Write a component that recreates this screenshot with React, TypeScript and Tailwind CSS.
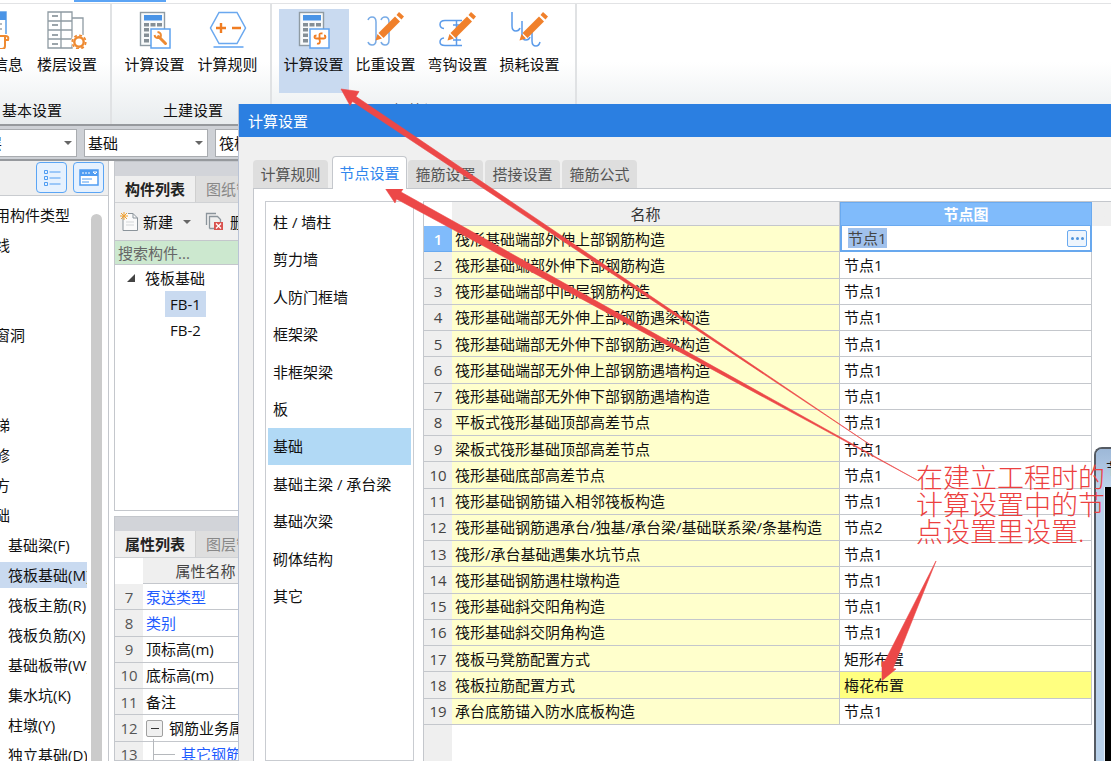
import type { ReactNode } from "react";
import clsx from "clsx";

const typeRows = [
  { text: "常用构件类型", child: false },
  { text: "轴线", child: false },
  { text: "", child: false },
  { text: "", child: false },
  { text: "门窗洞", child: false },
  { text: "", child: false },
  { text: "", child: false },
  { text: "楼梯", child: false },
  { text: "装修", child: false },
  { text: "土方", child: false },
  { text: "基础", child: false },
  { text: "基础梁(F)", child: true },
  { text: "筏板基础(M)", child: true, active: true },
  { text: "筏板主筋(R)", child: true },
  { text: "筏板负筋(X)", child: true },
  { text: "基础板带(W)", child: true },
  { text: "集水坑(K)", child: true },
  { text: "柱墩(Y)", child: true },
  { text: "独立基础(D)", child: true },
];

const propertyRows = [
  { no: 7, name: "泵送类型", link: true },
  { no: 8, name: "类别", link: true },
  { no: 9, name: "顶标高(m)", link: false },
  { no: 10, name: "底标高(m)", link: false },
  { no: 11, name: "备注", link: false },
];

const dialogTabs = ["计算规则", "节点设置", "箍筋设置", "搭接设置", "箍筋公式"];

const categories = [
  "柱 / 墙柱",
  "剪力墙",
  "人防门框墙",
  "框架梁",
  "非框架梁",
  "板",
  "基础",
  "基础主梁 / 承台梁",
  "基础次梁",
  "砌体结构",
  "其它",
];

const nodeRows = [
  ["筏形基础端部外伸上部钢筋构造", "节点1"],
  ["筏形基础端部外伸下部钢筋构造", "节点1"],
  ["筏形基础端部中间层钢筋构造", "节点1"],
  ["筏形基础端部无外伸上部钢筋遇梁构造", "节点1"],
  ["筏形基础端部无外伸下部钢筋遇梁构造", "节点1"],
  ["筏形基础端部无外伸上部钢筋遇墙构造", "节点1"],
  ["筏形基础端部无外伸下部钢筋遇墙构造", "节点1"],
  ["平板式筏形基础顶部高差节点", "节点1"],
  ["梁板式筏形基础顶部高差节点", "节点1"],
  ["筏形基础底部高差节点", "节点1"],
  ["筏形基础钢筋锚入相邻筏板构造", "节点1"],
  ["筏形基础钢筋遇承台/独基/承台梁/基础联系梁/条基构造", "节点2"],
  ["筏形/承台基础遇集水坑节点", "节点1"],
  ["筏形基础钢筋遇柱墩构造", "节点1"],
  ["筏形基础斜交阳角构造", "节点1"],
  ["筏形基础斜交阴角构造", "节点1"],
  ["筏板马凳筋配置方式", "矩形布置"],
  ["筏板拉筋配置方式", "梅花布置"],
  ["承台底筋锚入防水底板构造", "节点1"],
];

function InfoIcon() {
  return (
    <svg width="38" height="38" viewBox="0 0 38 38" fill="none">
      <path d="M1 1h31v22M1 1v35h18" stroke="#5b9fe8" strokeWidth="1.5" />
      <path d="M1 1h31v8H1z" fill="#4a94e6" />
      <path d="M18 13h10M18 18h10M18 23h6" stroke="#9aa3aa" strokeWidth="1.5" />
      <path d="M21 25h11q3 0 2 4h-3v6q0 3-3 3H17q3-1 3-4v-6q0-3 1-3M31 29v-3" stroke="#ee8a32" strokeWidth="2" />
    </svg>
  );
}

function FloorIcon() {
  return (
    <svg width="40" height="38" viewBox="0 0 40 38" fill="none">
      <path d="M1 1h24v36H1zM1 10h24M1 19h24M1 28h24M14 1v36M25 7h11v17" stroke="#8f9ba3" strokeWidth="1.3" />
      <path d="M5 5h6M5 14h6M5 24h6M5 33h6" stroke="#7b868e" strokeWidth="1.5" />
      <circle cx="32" cy="31" r="8" fill="white" />
      <circle cx="32" cy="31" r="4.7" stroke="#ee8a32" strokeWidth="2.4" />
      <circle cx="32" cy="31" r="6.7" stroke="#ee8a32" strokeWidth="1.8" strokeDasharray="2.9 2.36" />
    </svg>
  );
}

function CalculatorIcon({ children }: { children: ReactNode }) {
  return (
    <svg width="32" height="38" viewBox="0 0 32 38" fill="none">
      <rect x="1.5" y="1.5" width="24" height="33" fill="#f8fafb" stroke="#8f9ba3" strokeWidth="1.4" />
      <path d="M5 4h18v5.5H5z" fill="#4a94e6" />
      <path d="M5 12h5v3.500H5zM11.500 12h5v3.500h-5zM18 12h5v3.500h-5zM5 17h5v3.500H5zM5 22.500h5V26H5zM5 28h5v3.500H5z" fill="#858f96" />
      <rect x="12" y="18" width="19" height="19" fill="white" stroke="#5ea2f0" strokeWidth="1.500" />
      {children}
    </svg>
  );
}

function WrenchCalculatorIcon() {
  return (
    <CalculatorIcon>
      <path d="M19.500 25.500l7 7" stroke="#ee8a32" strokeWidth="3" strokeLinecap="round" />
      <path d="M18.500 21q3.500.5 3.500 3.500t-3 2.500q-3 0-3.500-3" stroke="#ee8a32" strokeWidth="1.800" />
    </CalculatorIcon>
  );
}

function RebarCalculatorIcon() {
  return (
    <CalculatorIcon>
      <path
        d="M21.500 29.500v-6q0-1.500 3-1M19 32.500q3 1 3-3M18.500 24.500q-2 0-2 1.500t2 1.500h7.500q1.500 0 1.500-1.500t-1.500-1.500"
        stroke="#f07d22"
        strokeWidth="1.800"
      />
    </CalculatorIcon>
  );
}

function RuleIcon() {
  return (
    <svg width="38" height="38" viewBox="0 0 38 38" fill="none">
      <path d="M10 1.500h18L36.500 17 28 32.500H10L1.500 17z" fill="white" stroke="#6aa8ef" strokeWidth="1.5" />
      <path d="M4.500 36h30" stroke="#5ea2f0" strokeWidth="1.500" />
      <path d="M7 17h10M12 12v10M23 17h9" stroke="#f07d22" strokeWidth="2.400" />
    </svg>
  );
}

function Pencil() {
  return (
    <g fill="#f0802b">
      <path d="M29 5.500l5 5L17.500 27l-5-5z" />
      <path d="M30.500 4l2.500-3L38 5.500 35.500 8.500z" />
      <path d="M11.500 23l4.500 4.500-6.500 2z" />
    </g>
  );
}

function WeightIcon() {
  return (
    <svg width="40" height="38" viewBox="0 0 40 38" fill="none">
      <path
        d="M2 9q1-3 4-3 4 0 4 5v18q0 5-4 5-3 0-4-3M15 9q1-3 4-3 4 0 4 5v18q0 5-4 5-3 0-4-3"
        stroke="#78abe6"
        strokeWidth="1.500"
      />
      <Pencil />
    </svg>
  );
}

function HookIcon() {
  return (
    <svg width="40" height="38" viewBox="0 0 40 38" fill="none">
      <path
        d="M6 17.500q-4-.5-4-4 0-4 5-4h17M6 27q-4 .5-4 4 0 3.500 5 3.500h17M18.500 9.500v25M15 29h8M15 14h7"
        stroke="#5b9bea"
        strokeWidth="1.500"
      />
      <Pencil />
    </svg>
  );
}

function LossIcon() {
  return (
    <svg width="40" height="38" viewBox="0 0 40 38" fill="none">
      <path d="M2 1v14q0 5 4 5 3 0 4-3M12 10v14q0 5 4 5 3 0 4-3M22 19v11q0 5 4 5 3 0 4-4" stroke="#5b9bea" strokeWidth="1.500" />
      <Pencil />
    </svg>
  );
}

function RibbonButton({ icon, label, active = false }: { icon: ReactNode; label: string; active?: boolean }) {
  return (
    <button
      type="button"
      className={clsx(
        "flex h-[84px] w-[70px] shrink-0 flex-col items-center gap-[5px] whitespace-nowrap pt-0.5",
        active && "bg-[#c9daf0]",
      )}
    >
      <span className="flex h-[38px] items-center">{icon}</span>
      {label}
    </button>
  );
}

function Ribbon() {
  return (
    <div className="flex h-[126px] shrink-0 flex-col border-b-2 border-[#96999d] bg-linear-to-b from-white from-50% to-[#e8ecee]">
      <div className="flex h-1 shrink-0 items-start border-b border-[#e2e3e5] pl-[74px]">
        <div className="h-0.5 w-[92px] bg-[#5ba4f5]" />
      </div>
      <div className="flex flex-1">
        <div className="flex w-28 shrink-0 justify-end border-r-2 border-[#e0e2e4] pt-[5px]">
          <div className="flex flex-col items-end gap-[7px]">
            <div className="flex gap-1 pr-2">
              <RibbonButton icon={<InfoIcon />} label="工程信息" />
              <RibbonButton icon={<FloorIcon />} label="楼层设置" />
            </div>
            <div className="pr-12">基本设置</div>
          </div>
        </div>
        <div className="flex w-40 shrink-0 flex-col items-center gap-[7px] border-r-2 border-[#e0e2e4] pt-[5px]">
          <div className="flex gap-[3px]">
            <RibbonButton icon={<WrenchCalculatorIcon />} label="计算设置" />
            <RibbonButton icon={<RuleIcon />} label="计算规则" />
          </div>
          <div className="pl-1">土建设置</div>
        </div>
        <div className="flex w-[305px] shrink-0 flex-col items-center gap-[7px] border-r-2 border-[#e0e2e4] pt-[5px]">
          <div className="flex gap-0.5 pr-1">
            <RibbonButton icon={<RebarCalculatorIcon />} label="计算设置" active />
            <RibbonButton icon={<WeightIcon />} label="比重设置" />
            <RibbonButton icon={<HookIcon />} label="弯钩设置" />
            <RibbonButton icon={<LossIcon />} label="损耗设置" />
          </div>
          <div>钢筋设置</div>
        </div>
      </div>
    </div>
  );
}

function SelectorBar() {
  const box = "h-7 w-[124px] appearance-none border border-[#a9acb0] bg-white px-[3px] outline-none";
  const caret =
    "pointer-events-none absolute top-3 right-[5px] border-x-4 border-t-4 border-x-transparent border-t-[#666]";
  return (
    <div className="flex h-[35px] shrink-0 items-center gap-[7px] border-b-2 border-[#96999d] bg-[#ced1d6]">
      <div className="relative -ml-[47px]">
        <select aria-label="楼层" className={box}>
          <option>基础层</option>
        </select>
        <span className={caret} />
      </div>
      <div className="relative">
        <select aria-label="构件分类" className={box}>
          <option>基础</option>
        </select>
        <span className={caret} />
      </div>
      <select aria-label="构件" className={box}>
        <option>筏板基础</option>
      </select>
    </div>
  );
}

function TypeSidebar() {
  return (
    <aside className="flex w-[109px] shrink-0 flex-col border-r border-[#c4c7cc]">
      <div className="flex h-[35px] shrink-0 items-start justify-end gap-1.5 border-b border-[#c9ccd0] bg-[#efefef] pt-px pr-1">
        <button type="button" aria-label="列表" className="flex size-[31px] items-center justify-center rounded-sm border border-[#5aa5f5] bg-[#e6f1fe]">
          <svg width="18" height="18" viewBox="0 0 18 18" fill="none" stroke="#4f9cf2">
            <path d="M1.500 1.500h3v3h-3zM1.500 7.500h3v3h-3zM1.500 13.500h3v3h-3zM6.500 3h11M6.500 9h11M6.500 15h11" />
          </svg>
        </button>
        <button type="button" aria-label="窗口" className="flex size-[31px] items-center justify-center rounded-sm border border-[#5aa5f5] bg-[#e6f1fe]">
          <svg width="20" height="18" viewBox="0 0 20 18" fill="none">
            <path d="M1 1h18v15H1z" fill="white" stroke="#4f9cf2" strokeWidth="1.500" />
            <path d="M1 1h18v6H1z" fill="#4f9cf2" />
            <path d="M3 4h2M6 4h2M9 4h2M14 3h4l-2 2z" stroke="white" />
            <path d="M3 10h10M3 13h7" stroke="#4f9cf2" />
          </svg>
        </button>
      </div>
      <div className="flex flex-1 overflow-hidden pt-1">
        <ul className="w-[87px] shrink-0 overflow-hidden">
          {typeRows.map((row, i) => (
            <li key={i} className={clsx("flex h-[30px] items-center whitespace-nowrap", row.child ? "pl-2" : "-ml-5")}>
              <span className={clsx(row.active && "-ml-2 bg-[#c9daf0] py-[3px] pl-2")}>{row.text}</span>
            </li>
          ))}
        </ul>
        <div className="mt-3.5 ml-1 w-[11px] rounded-t-md bg-[#cbcbcb]" />
      </div>
    </aside>
  );
}

function PanelTabs({ active, other }: { active: string; other: string }) {
  return (
    <div className="flex h-[27px] shrink-0 border-b border-[#d0d2d5] bg-[#dedede]">
      <button type="button" className="w-[81px] shrink-0 border-r border-[#cfcfcf] bg-[#efefef] font-semibold text-[#222]">
        {active}
      </button>
      <button type="button" className="shrink-0 pl-2.5 text-[#888]">
        {other}
      </button>
    </div>
  );
}

function ComponentPanel() {
  return (
    <section className="flex h-[350px] shrink-0 flex-col border border-[#c4c7cc]">
      <div className="h-3.5 shrink-0 bg-[#d2d4d9]" />
      <PanelTabs active="构件列表" other="图纸管理" />
      <div className="flex h-[38px] shrink-0 items-center border-b border-[#c4c7cc] bg-[#efefef] pl-[5px] whitespace-nowrap">
        <button type="button" className="flex items-center">
          <svg width="19" height="20" viewBox="0 0 19 20" fill="none">
            <path d="M3 4v14.500h14.500V6L13 1.500H8M13 1.500V6h4.500" fill="#fafafa" stroke="#8b949b" />
            <path d="M6 10h8M6 13h8" stroke="#d4d7d9" />
            <path d="M4 0v8M0 4h8M1 1l6 6M7 1L1 7" stroke="#f0a030" />
          </svg>
          <span className="ml-1">新建</span>
          <span className="ml-2.5 border-x-4 border-t-4 border-x-transparent border-t-[#666]" />
        </button>
        <button type="button" className="ml-3.5 flex items-center">
          <svg width="19" height="19" viewBox="0 0 19 19" fill="none">
            <path d="M1.500 13V1.500H11M4.500 16.500V4.500h8l3 3V10M4.500 16.500H9" stroke="#8b949b" strokeWidth="1.300" />
            <path d="M9 10h9v8H9z" fill="#d9534f" />
            <path d="M11 11.500l5 5M16 11.500l-5 5" stroke="white" strokeWidth="1.300" />
          </svg>
          <span className="ml-1.5">删除</span>
        </button>
      </div>
      <input
        aria-label="搜索构件"
        placeholder="搜索构件..."
        className="h-6 w-full shrink-0 border-b border-[#c4c7cc] bg-[#cce8cf] pl-[3px] outline-none placeholder:text-[#666]"
      />
      <ul className="leading-[26px]">
        <li className="flex h-[26px] items-center pl-3">
          <svg width="9" height="9" viewBox="0 0 9 9">
            <path d="M8 0v8H0z" fill="#444" />
          </svg>
          <span className="ml-[9px]">筏板基础</span>
        </li>
        <li className="flex pl-[50px]">
          <span className="bg-[#c9daf0] px-[5px]">FB-1</span>
        </li>
        <li className="flex pl-[50px]">
          <span className="px-[5px]">FB-2</span>
        </li>
      </ul>
    </section>
  );
}

function PropertyPanel() {
  const numberCell = "border-b border-[#c4c7cc] bg-[#efefef] p-0 text-center text-[#555]";
  const nameCell = "border-b border-[#c4c7cc] p-0 pl-[3px]";
  return (
    <section className="flex flex-1 flex-col overflow-hidden border border-[#c4c7cc]">
      <div className="h-3.5 shrink-0 bg-[#d2d4d9]" />
      <PanelTabs active="属性列表" other="图层管理" />
      <table className="h-[210px] w-[153px] shrink-0 table-fixed border-separate border-spacing-0 whitespace-nowrap">
        <thead>
          <tr className="h-[26px]">
            <th aria-label="序号" className="w-7 p-0" />
            <th className="border-b border-[#c4c7cc] bg-[#efefef] p-0 text-center font-normal text-[#444]">属性名称</th>
          </tr>
        </thead>
        <tbody>
          {propertyRows.map((row) => (
            <tr key={row.no}>
              <td className={numberCell}>{row.no}</td>
              <td className={clsx(nameCell, row.link && "text-[#1f5cff]")}>{row.name}</td>
            </tr>
          ))}
          <tr>
            <td className={numberCell}>12</td>
            <td className={nameCell}>
              <div className="flex items-center gap-1.5 overflow-hidden">
                <button type="button" aria-label="折叠" className="flex size-[17px] shrink-0 items-center justify-center rounded-xs border border-[#a0a0a0] bg-[#f0f0f0]">
                  <span className="h-px w-2 bg-[#333]" />
                </button>
                钢筋业务属性
              </div>
            </td>
          </tr>
          <tr>
            <td className={numberCell}>13</td>
            <td className={nameCell}>
              <div className="flex items-center gap-1.5 pl-[7px] text-[#1f5cff]">
                <svg width="22" height="20" viewBox="0 0 22 20" className="shrink-0 overflow-visible">
                  <path d="M.5-5v28M.5 10.500H22" stroke="#b5b8bc" fill="none" />
                </svg>
                其它钢筋
              </div>
            </td>
          </tr>
        </tbody>
      </table>
    </section>
  );
}

function NodeTable() {
  return (
    <table className="h-[523px] w-[668px] table-fixed border-separate border-spacing-0 whitespace-nowrap">
      <thead>
        <tr className="h-6">
          <th aria-label="序号" className="w-7 bg-white p-0" />
          <th className="border-r border-b border-[#c4c7cc] bg-[#efefef] p-0 text-center font-normal text-[#333]">名称</th>
          <th className="w-[252px] border border-[#6aaaf0] bg-[#80bbfb] p-0 text-center font-semibold text-white">节点图</th>
        </tr>
      </thead>
      <tbody>
        {nodeRows.map(([name, value], i) => (
          <tr key={name}>
            <td
              className={clsx(
                "border-b p-0 text-center",
                i === 0 ? "border-[#6aaaf0] bg-[#80bbfb] font-semibold text-white" : "border-[#c4c7cc] bg-[#efefef] text-[#444]",
              )}
            >
              {i + 1}
            </td>
            <td className="border-r border-b border-[#c4c7cc] bg-[#ffffcc] p-0 pl-[3px]">{name}</td>
            {i === 0 ? (
              <td className="border-2 border-t-0 border-[#68a8ee] p-0 pr-[3px] pl-1.5">
                <div className="flex h-[19px] items-center justify-between">
                  <input aria-label={name} defaultValue={value} className="h-5 w-[39px] bg-[#a0c1ec] text-[#444] outline-none" />
                  <button type="button" aria-label="选择节点图" className="flex h-[17px] w-5 items-center justify-center gap-0.5 rounded-xs border border-[#6aaaf0] bg-[#eef5fd]">
                    <span className="size-[3px] rounded-full bg-[#4f94dc]" />
                    <span className="size-[3px] rounded-full bg-[#4f94dc]" />
                    <span className="size-[3px] rounded-full bg-[#4f94dc]" />
                  </button>
                </div>
              </td>
            ) : (
              <td className={clsx("border-r border-b border-[#c4c7cc] p-0 pl-1", value === "梅花布置" && "bg-[#ffff80]")}>{value}</td>
            )}
          </tr>
        ))}
      </tbody>
    </table>
  );
}

function SettingsDialog() {
  return (
    <div role="dialog" aria-label="计算设置" className="absolute top-[104px] right-0 bottom-0 left-[238px] flex flex-col overflow-hidden border-l border-[#b9c3d6] bg-[#f0f0f0]">
      <h1 className="flex h-[33px] shrink-0 items-center bg-[#2b7fe1] pl-[9px] text-white">计算设置</h1>
      <div role="tablist" className="flex h-[51px] shrink-0 items-end gap-0.5 pl-3.5">
        {dialogTabs.map((tab) => {
          const active = tab === "节点设置";
          return (
            <button
              key={tab}
              type="button"
              role="tab"
              aria-selected={active}
              className={clsx(
                "w-[75px] shrink-0 rounded-t-sm text-center",
                active
                  ? "z-10 -mr-px -mb-px ml-0.5 h-[33px] border border-b-0 border-[#c4c7cc] bg-white text-[#2f86ee]"
                  : "h-7 bg-[#dedede] text-[#555]",
              )}
            >
              {tab}
            </button>
          );
        })}
      </div>
      <div className="ml-3.5 flex flex-1 gap-[9px] overflow-hidden border-t border-l border-[#c4c7cc] bg-white pt-3 pl-[11px]">
        <nav className="w-[149px] shrink-0 border border-[#c9ccd1] px-0.5 pt-px">
          <ul className="flex h-[412px] flex-col">
            {categories.map((item) => (
              <li key={item} className="flex flex-1">
                <a href="#" className={clsx("flex flex-1 items-center pl-[5px]", item === "基础" && "bg-[#b1d9f5]")}>
                  {item}
                </a>
              </li>
            ))}
          </ul>
        </nav>
        <div className="flex-1 border-t border-l border-[#c4c7cc]">
          <div className="bg-linear-to-b from-[#efefef] from-[24px] to-white to-[24px]">
            <NodeTable />
          </div>
          <div className="h-full w-7 bg-[#efefef]" />
        </div>
      </div>
    </div>
  );
}

function DrawingWindow() {
  return (
    <div className="absolute top-[447px] right-0 bottom-0 left-[1094px] flex flex-col overflow-hidden rounded-tl-lg border-t-2 border-l-2 border-[#555b63] bg-[#b9d1ea]">
      <div className="flex h-[38px] shrink-0 items-center bg-linear-to-b from-[#9db8d8] to-[#bdd3ea] pl-2.5 whitespace-nowrap">节点图</div>
      <div className="ml-2 flex-1 border-l border-[#e3edf8] bg-black" />
    </div>
  );
}

function Annotation() {
  return (
    <>
      <svg
        className="pointer-events-none absolute top-0 left-0"
        width="1111"
        height="761"
        viewBox="0 0 1111 761"
        fill="#ec4848"
        stroke="#ec4848"
        strokeWidth="0.6"
      >
        <path d="M341 89L359 91.500L356 96.500L872 446L352.500 101.500L350 105.500Z" />
        <path d="M385 188L403 189L401 192L917 480L396.500 199L395 203Z" />
        <path d="M936 561L893 668.500L896 669L882 680.500V662L885 661Z" />
      </svg>
      <p className="pointer-events-none absolute top-[464px] left-[916px] text-[27px] leading-[27px] font-light whitespace-nowrap text-[#ec4040]">
        在建立工程时的
        <br />
        计算设置中的节
        <br />
        点设置里设置.
      </p>
    </>
  );
}

export default function App() {
  return (
    <div className="relative flex h-screen flex-col overflow-hidden bg-white font-['Open_Sans','Noto_Sans_CJK_SC',sans-serif] text-[15px] leading-5 text-[#111]">
      <Ribbon />
      <SelectorBar />
      <div className="flex flex-1 overflow-hidden">
        <TypeSidebar />
        <div className="ml-[5px] flex flex-1 flex-col gap-[5px]">
          <ComponentPanel />
          <PropertyPanel />
        </div>
      </div>
      <SettingsDialog />
      <DrawingWindow />
      <Annotation />
    </div>
  );
}
